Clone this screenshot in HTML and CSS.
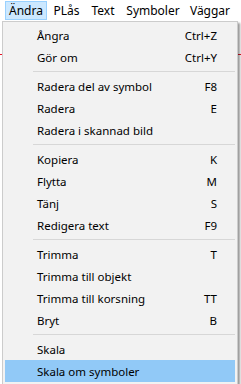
FILE: index.html
```html
<!DOCTYPE html>
<html lang="sv">
<head>
    <meta charset="UTF-8">
    <title>Ändra</title>
    <link rel="stylesheet" href="styles.css">
</head>
<body>
    <!-- Menu bar -->
    <div class="menubar">
        <span class="bar-item open w-andra">Ändra</span>
        <span class="bar-item w-plas">PLås</span>
        <span class="bar-item w-text">Text</span>
        <span class="bar-item w-symb">Symboler</span>
        <span class="bar-item w-vagg">Väggar</span>
    </div>

    <!-- Window content behind the menu -->
    <div class="canvas">
        <div class="red-line"></div>
    </div>

    <!-- Dropdown -->
    <div class="dropdown">
        <div class="item"><span>Ångra</span><span class="key">Ctrl+Z</span></div>
        <div class="item"><span>Gör om</span><span class="key">Ctrl+Y</span></div>
        <div class="sep"></div>
        <div class="item"><span>Radera del av symbol</span><span class="key">F8</span></div>
        <div class="item"><span>Radera</span><span class="key">E</span></div>
        <div class="item"><span>Radera i skannad bild</span><span class="key"></span></div>
        <div class="sep"></div>
        <div class="item"><span>Kopiera</span><span class="key">K</span></div>
        <div class="item"><span>Flytta</span><span class="key">M</span></div>
        <div class="item"><span>Tänj</span><span class="key">S</span></div>
        <div class="item"><span>Redigera text</span><span class="key">F9</span></div>
        <div class="sep"></div>
        <div class="item"><span>Trimma</span><span class="key">T</span></div>
        <div class="item"><span>Trimma till objekt</span><span class="key"></span></div>
        <div class="item"><span>Trimma till korsning</span><span class="key">TT</span></div>
        <div class="item"><span>Bryt</span><span class="key">B</span></div>
        <div class="sep"></div>
        <div class="item"><span>Skala</span><span class="key"></span></div>
        <div class="item active"><span>Skala om symboler</span><span class="key"></span></div>
    </div>
</body>
</html>
```

FILE: styles.css
```css
body {
    margin: 0;
    width: 241px;
    height: 384px;
    overflow: hidden;
    position: relative;
    background: #f0f0f0;
    font-family: 'Noto Sans', 'Open Sans', sans-serif;
    font-size: 11.5px;
    color: #000;
}
.menubar {
    height: 21px;
    background: #ffffff;
    display: flex;
    align-items: stretch;
    padding-left: 5px;
    box-sizing: border-box;
}
.bar-item {
    display: flex;
    align-items: center;
    justify-content: center;
    height: 19px;
    margin-top: 1px;
    box-sizing: border-box;
    border: 1px solid transparent;
    white-space: nowrap;
    font-size: 12px;
}
.bar-item.open {
    background: #cce8ff;
    border-color: #99d1ff;
}
.w-andra { width: 42px; margin-right: 1px; }
.w-plas { width: 37px; }
.w-text { width: 36px; }
.w-symb { width: 64px; }
.w-vagg { width: 50px; }
.canvas {
    height: 363px;
    background: #ffffff;
}
.red-line {
    height: 1px;
    background: #e81123;
    position: relative;
    top: 33px;
}
.dropdown {
    position: absolute;
    left: 2px;
    top: 21px;
    width: 236px;
    box-sizing: border-box;
    background: #f2f2f2;
    border: 1px solid #cccccc;
    padding: 2px;
    box-shadow: 2px 2px 2px rgba(0, 0, 0, 0.4);
}
.item {
    height: 22px;
    display: flex;
    align-items: center;
    justify-content: space-between;
    padding: 0 18px 0 32px;
    white-space: nowrap;
}
.item.active {
    background: #91c9f7;
}
.sep {
    height: 7px;
    position: relative;
}
.sep::after {
    content: '';
    position: absolute;
    left: 28px;
    right: 0;
    top: 3px;
    height: 1px;
    background: #d7d7d7;
}
```
